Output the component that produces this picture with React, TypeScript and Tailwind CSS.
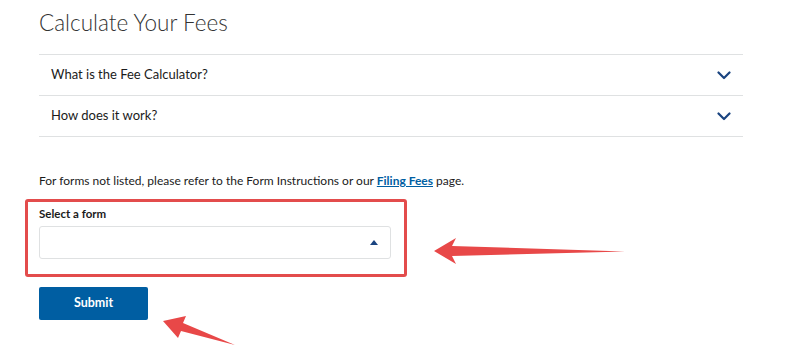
import React from 'react';

const Chevron = () => (
  <svg width="14" height="9" viewBox="0 0 14 9" fill="none">
    <path d="M1.5 1.5L7 7L12.5 1.5" stroke="#1a4480" strokeWidth="2.2" strokeLinecap="round" strokeLinejoin="round" />
  </svg>
);

const AccordionRow = ({ label }: { label: string }) => (
  <button className="w-full h-[41px] flex items-center justify-between pl-3 pr-[12px] border-b border-[#dfe1e2] text-left">
    <span className="text-[13px] text-[#1b1b1b]">{label}</span>
    <Chevron />
  </button>
);

export default function App() {
  return (
    <div className="relative w-[800px] h-[364px] bg-white overflow-hidden font-['Lato','Liberation_Sans',sans-serif] text-[#1b1b1b]">
      <div className="pl-[39px] w-[743px]">
        {/* heading */}
        <h1 className="pt-[7px] mb-[15px] text-[22.5px] leading-[32px] font-light text-[#333]">Calculate Your Fees</h1>

        {/* accordion */}
        <div className="border-t border-[#dfe1e2]">
          <AccordionRow label="What is the Fee Calculator?" />
          <AccordionRow label="How does it work?" />
        </div>

        <p className="mt-[34px] text-[12px] leading-[20px]">
          For forms not listed, please refer to the Form Instructions or our{' '}
          <a href="#" className="font-bold text-[#005ea2] underline">Filing Fees</a> page.
        </p>

        {/* form */}
        <label className="block mt-[15px] text-[11.5px] leading-[16px] font-bold">Select a form</label>
        <div className="mt-[4px] w-[352px] h-[33px] border border-[#dfe1e2] rounded-[3px] flex items-center justify-end pr-[12px]">
          <svg width="8" height="5" viewBox="0 0 8 5">
            <path d="M0 5L4 0L8 5Z" fill="#1a4480" />
          </svg>
        </div>

        <button className="mt-[28px] w-[109px] h-[33px] bg-[#005ea2] rounded-[2px] text-white text-[12.5px] font-bold">
          Submit
        </button>
      </div>

      {/* annotation: highlight box */}
      <div className="absolute left-[25px] top-[199px] w-[382px] h-[78px] border-[3px] border-[#e34c4c] rounded-[3px] pointer-events-none" />

      {/* annotation: arrows */}
      <svg className="absolute inset-0 pointer-events-none" width="800" height="364" viewBox="0 0 800 364">
        <polygon points="434,251 456,238 452,246 625,251.5 452,256 456,264" fill="#e84848" />
        <polygon points="163,321 186,316 183,323 235,345 181,331 178,338" fill="#e84848" />
      </svg>
    </div>
  );
}
